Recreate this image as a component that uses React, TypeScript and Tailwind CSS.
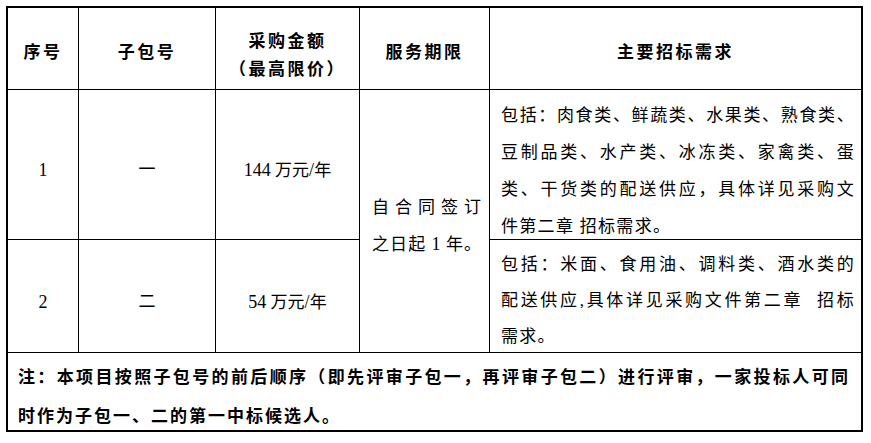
import React from "react";

const J = "text-justify [text-align-last:justify]";

export default function App() {
  return (
    <div className="bg-white w-[871px] h-[443px] pt-[6px] pl-[6px] text-black font-['Liberation_Serif','Noto_Sans_CJK_SC',serif]">
      <div className="w-[857px] h-[426px] border-2 border-black grid grid-cols-[71px_137px_144px_130px_371px] grid-rows-[82px_150px_113px_77px]">
        {/* header */}
        <div className="border-r border-b border-black flex items-center justify-center pt-[9px] text-[17px] font-bold tracking-[2.5px] leading-[28px]">
          序号
        </div>
        <div className="border-r border-b border-black flex items-center justify-center pt-[9px] text-[17px] font-bold tracking-[2.5px] leading-[28px]">
          子包号
        </div>
        <div className="border-r border-b border-black flex flex-col items-center justify-center pt-[15px] text-[17px] font-bold tracking-[2.5px] leading-[28px]">
          <div>采购金额</div>
          <div>（最高限价）</div>
        </div>
        <div className="border-r border-b border-black flex items-center justify-center pt-[9px] text-[17px] font-bold tracking-[2.5px] leading-[28px]">
          服务期限
        </div>
        <div className="border-b border-black flex items-center justify-center pt-[9px] text-[17px] font-bold tracking-[2.5px] leading-[28px]">
          主要招标需求
        </div>

        {/* row 1 */}
        <div className="border-r border-b border-black flex items-center justify-center pt-[11px] text-[18px] leading-[36px]">
          1
        </div>
        <div className="border-r border-b border-black flex items-center justify-center pt-[11px] text-[17px] leading-[36px]">
          一
        </div>
        <div className="border-r border-b border-black flex items-center justify-center pt-[11px] text-[17px] leading-[36px]">
          <span>
            <span className="text-[18px]">144</span> 万元<span className="text-[18px]">/</span>年
          </span>
        </div>
        <div className="row-span-2 border-r border-b border-black flex flex-col justify-center pt-[11px] pl-[12px] pr-[8px] text-[17px] leading-[36px]">
          <div className={J}>自合同签订</div>
          <div className={J}>
            之日起 <span className="text-[18px]">1</span> 年。
          </div>
        </div>
        <div className="border-b border-black pt-[7px] pl-[11px] pr-[6px] text-[17px] leading-[37px] tracking-[1.3px] overflow-visible">
          <div className={J}>包括：肉食类、鲜蔬类、水果类、熟食类、</div>
          <div className={J}>豆制品类、水产类、冰冻类、家禽类、蛋</div>
          <div className={J}>类、干货类的配送供应，具体详见采购文</div>
          <div>件第二章 招标需求。</div>
        </div>

        {/* row 2 */}
        <div className="border-r border-b border-black flex items-center justify-center pt-[12px] text-[18px] leading-[36px]">
          2
        </div>
        <div className="border-r border-b border-black flex items-center justify-center pt-[12px] text-[17px] leading-[36px]">
          二
        </div>
        <div className="border-r border-b border-black flex items-center justify-center pt-[12px] text-[17px] leading-[36px]">
          <span>
            <span className="text-[18px]">54</span> 万元<span className="text-[18px]">/</span>年
          </span>
        </div>
        <div className="border-b border-black pt-[7px] pl-[11px] pr-[6px] text-[17px] leading-[36px] tracking-[1.3px]">
          <div className={J}>包括：米面、食用油、调料类、酒水类的</div>
          <div className={J}>配送供应,具体详见采购文件第二章&nbsp; 招标</div>
          <div>需求。</div>
        </div>

        {/* note */}
        <div className="col-span-5 pt-[5px] pl-[10px] pr-[11px] text-[17px] font-bold leading-[39px] tracking-[2px]">
          <div className={J}>注：本项目按照子包号的前后顺序（即先评审子包一，再评审子包二）进行评审，一家投标人可同</div>
          <div>时作为子包一、二的第一中标候选人。</div>
        </div>
      </div>
    </div>
  );
}
